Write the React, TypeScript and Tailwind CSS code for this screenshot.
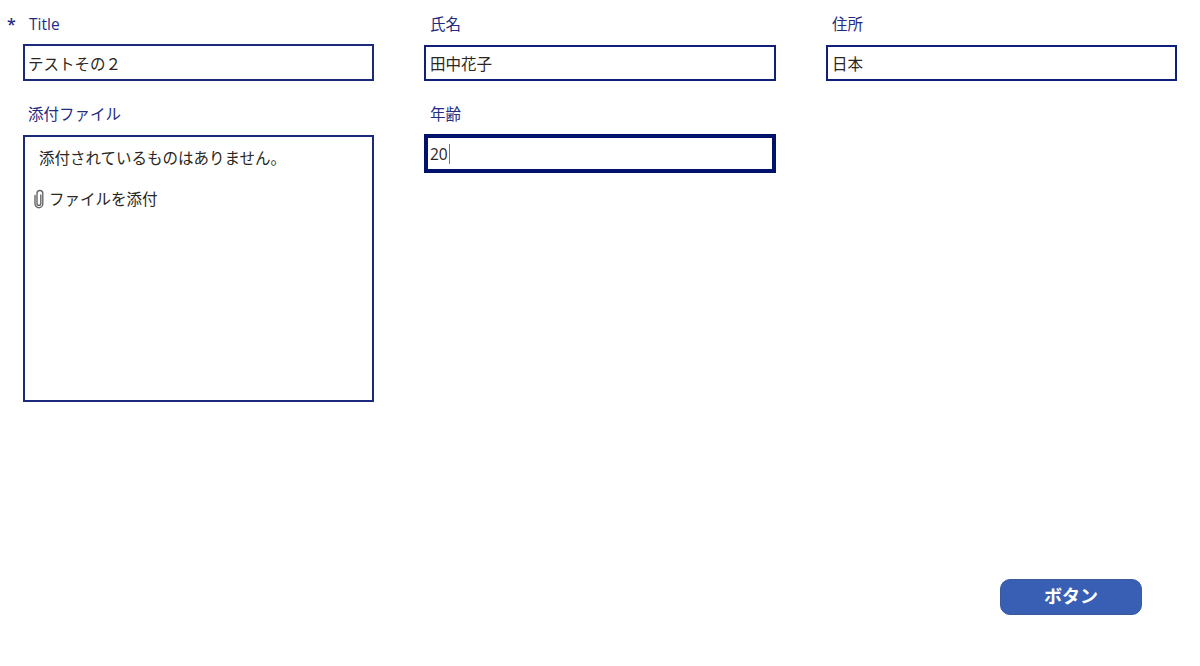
import React from "react";

const font = "font-['Open_Sans','Noto_Sans_CJK_JP',sans-serif]";

function Label({ children, star, tall }: { children: React.ReactNode; star?: boolean; tall?: boolean }) {
  return (
    <div
      className={
        (tall ? "h-[45px] " : "h-[44px] ") +
        "flex items-start pl-[6px] pt-[17px] text-[15.5px] leading-[15.5px] text-[#252b80]"
      }
    >
      {star && <span className="-ml-[22px] w-[22px] text-[16px] font-semibold">*</span>}
      <span>{children}</span>
    </div>
  );
}

function Field({ label, value, star, focused, tall }: { label: string; value: string; star?: boolean; focused?: boolean; tall?: boolean }) {
  return (
    <div className="flex flex-col">
      <Label star={star} tall={tall}>{label}</Label>
      <div
        className={
          focused
            ? "flex h-[39px] items-center border-4 border-[#00126b] pl-[2px] pt-[3px] text-[15.5px] text-[#2b2620]"
            : tall
              ? "flex h-[36px] items-center border-2 border-[#0f1f7a] pl-[4px] pt-[3px] text-[15.5px] text-[#2b2620]"
              : "flex h-[37px] items-center border-2 border-[#1c2a7c] pl-[3px] pt-[4px] text-[15.5px] text-[#2b2620]"
        }
      >
        <span>{value}</span>
        {focused && <span className="-mt-[2px] ml-[1px] h-[20px] w-px bg-[#777]" />}
      </div>
    </div>
  );
}

function Clip() {
  return (
    <svg width="12" height="20" viewBox="0 0 12 20" fill="none" stroke="#666" strokeWidth="1.4" strokeLinecap="round" strokeLinejoin="round" className="shrink-0">
      <path d="M7.8 6v8.4a1.9 1.9 0 0 1-3.8 0V4.4a2.9 2.9 0 0 1 5.8 0v10.4a3.9 3.9 0 0 1-7.8 0V6.5" />
    </svg>
  );
}

export default function App() {
  return (
    <div className={`${font} flex h-[666px] w-[1200px] flex-col bg-white`}>
      <div className="grid grid-cols-[351px_352px_351px] gap-x-[50px] pl-[23px]">
        <Field label="Title" value="テストその２" star />
        <Field label="氏名" value="田中花子" tall />
        <Field label="住所" value="日本" tall />
        <div className="flex flex-col pt-[9px]">
          <Label tall>
            <span className="-ml-[1px]">添付ファイル</span>
          </Label>
          <div className="flex h-[267px] flex-col border-2 border-[#1c2a7c] text-[15.5px] text-[#2b2620]">
            <div className="pl-[14px] pt-[10px] leading-[22px]">添付されているものはありません。</div>
            <div className="mt-[19px] flex items-center gap-[4px] pl-[8px] leading-[22px]">
              <Clip />
              <span>ファイルを添付</span>
            </div>
          </div>
        </div>
        <div className="pt-[9px]">
          <Field label="年齢" value="20" focused />
        </div>
      </div>
      <div className="mt-auto flex justify-end pb-[51px] pr-[58px]">
        <button className="h-[36px] w-[142px] rounded-[10px] border border-[#3a5a9c] bg-[#385fb3] pb-[2px] text-[18px] font-bold text-white">
          ボタン
        </button>
      </div>
    </div>
  );
}
